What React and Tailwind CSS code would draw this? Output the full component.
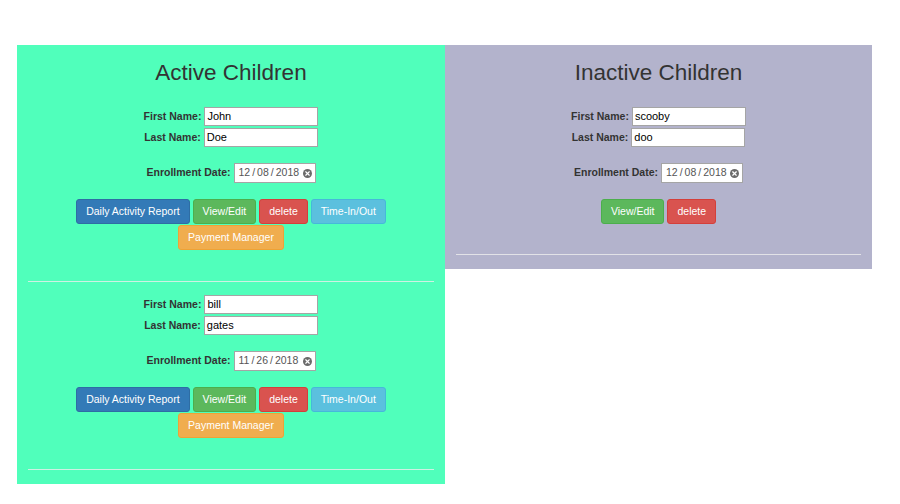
import { X } from 'lucide-react';

const btnBase = 'h-[25px] px-[9px] rounded-[3px] text-white text-[10.5px] leading-none border flex items-center';

function Btn({ color, children }) {
    const styles = {
        blue: 'bg-[#337ab7] border-[#2e6da4]',
        green: 'bg-[#5cb85c] border-[#4cae4c]',
        red: 'bg-[#d9534f] border-[#d43f3a]',
        cyan: 'bg-[#5bc0de] border-[#46b8da]',
        orange: 'bg-[#f0ad4e] border-[#eea236]',
    };
    return <button className={`${btnBase} ${styles[color]}`}>{children}</button>;
}

function TextRow({ label, value }) {
    return (
        <div className="flex items-center justify-center gap-[3px]">
            <span className="font-bold text-[10.5px] text-[#333]">{label}</span>
            <div className="w-[114px] h-[19px] bg-white border border-[#a5a5a5] px-[2px] flex items-center text-[11px] text-black">
                {value}
            </div>
        </div>
    );
}

function DateRow({ value }) {
    const [m, d, y] = value.split('/');
    return (
        <div className="flex items-center justify-center gap-[3px] mt-[16px]">
            <span className="font-bold text-[10.5px] text-[#333]">Enrollment Date:</span>
            <div className="w-[82px] h-[20px] bg-white border border-[#a5a5a5] pl-[4px] pr-[3px] flex items-center justify-between text-[10.5px] text-[#555] whitespace-nowrap">
                <span className="flex gap-[2px]">
                    <span>{m}</span><span>/</span><span>{d}</span><span>/</span><span>{y}</span>
                </span>
                <span className="w-[9px] h-[9px] rounded-full bg-[#6b6b6b] flex items-center justify-center">
                    <X className="w-[7px] h-[7px] text-white" strokeWidth={4} />
                </span>
            </div>
        </div>
    );
}

function Child({ first, last, date, active }) {
    return (
        <div>
            <div className="flex flex-col gap-[2px]">
                <TextRow label="First Name:" value={first} />
                <TextRow label="Last Name:" value={last} />
            </div>
            <DateRow value={date} />
            <div className="mt-[16px] flex flex-col items-center gap-[1px]">
                {active ? (
                    <>
                        <div className="flex gap-[3px]">
                            <Btn color="blue">Daily Activity Report</Btn>
                            <Btn color="green">View/Edit</Btn>
                            <Btn color="red">delete</Btn>
                            <Btn color="cyan">Time-In/Out</Btn>
                        </div>
                        <Btn color="orange">Payment Manager</Btn>
                    </>
                ) : (
                    <div className="flex gap-[3px]">
                        <Btn color="green">View/Edit</Btn>
                        <Btn color="red">delete</Btn>
                    </div>
                )}
            </div>
            <hr className={`border-0 border-t border-[#eee]/80 ${active ? 'mt-[31px]' : 'mt-[30px]'} mb-[13px]`} />
        </div>
    );
}

export default function App() {
    return (
        <div className="min-h-[504px] bg-white pt-[45px] pl-[17px] font-['Liberation_Sans',Arial,sans-serif] text-[#333]">
            <div className="flex items-start">
                <section className="w-[428px] bg-[#50ffbb] px-[11px] pb-[1px]">
                    <h2 className="text-center text-[22.5px] leading-[25px] mt-[15px] mb-[22px]">Active Children</h2>
                    <Child first="John" last="Doe" date="12/08/2018" active />
                    <Child first="bill" last="gates" date="11/26/2018" active />
                </section>
                <section className="w-[427px] bg-[#b3b3cc] px-[11px] pb-[1px]">
                    <h2 className="text-center text-[22.5px] leading-[25px] mt-[15px] mb-[22px]">Inactive Children</h2>
                    <Child first="scooby" last="doo" date="12/08/2018" />
                </section>
            </div>
        </div>
    );
}
